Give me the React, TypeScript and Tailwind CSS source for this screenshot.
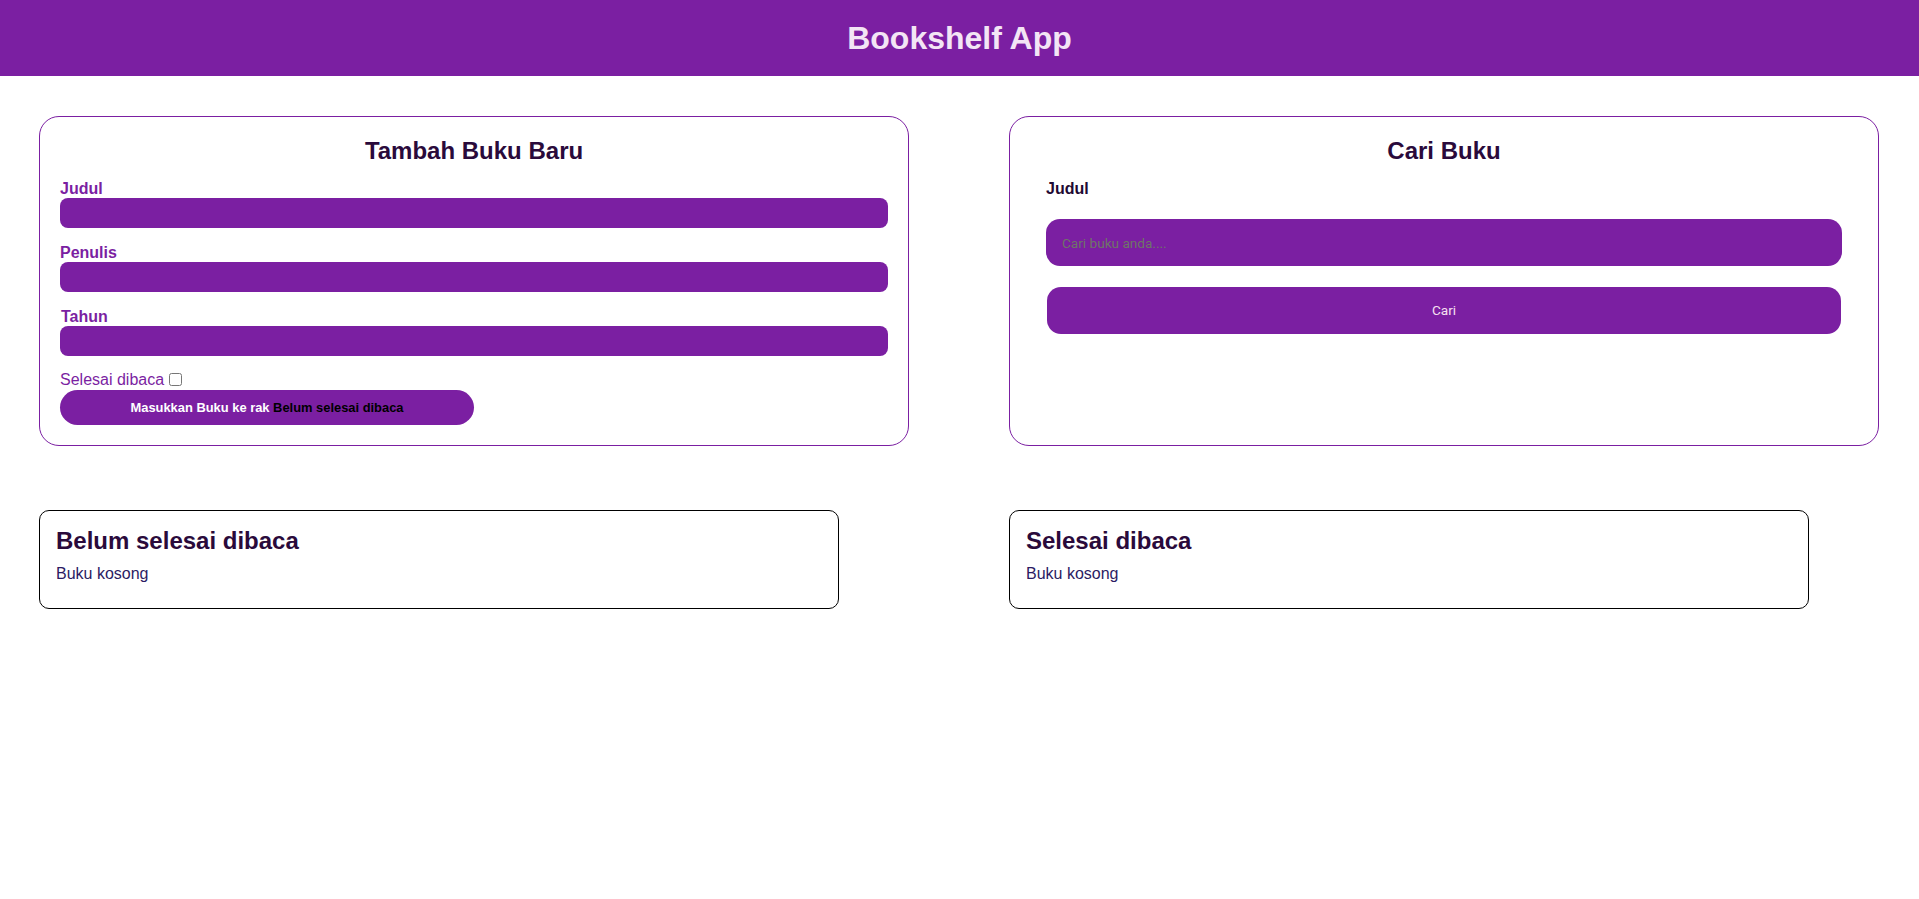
import React from "react";

export default function App() {
  return (
    <div className="min-h-[899px] bg-white font-['Liberation_Sans',Arial,sans-serif]">
      <header className="h-[76px] bg-[#7b1fa2] flex items-center justify-center">
        <h1 className="text-[32px] font-bold leading-[37px] text-[#f3e5f5]">Bookshelf App</h1>
      </header>
      <main className="pl-[39px] pr-[40px] pt-[40px]">
        <div className="grid grid-cols-2 gap-x-[100px]">
          <section className="border border-[#7b1fa2] rounded-[20px] p-[20px]">
            <h2 className="text-[24px] leading-[28px] font-bold text-center text-[#2a0a3b]">Tambah Buku Baru</h2>
            <form className="mt-[14px] flex flex-col" onSubmit={(e) => e.preventDefault()}>
              <label className="block text-[16px] leading-[19px] font-bold text-[#7b1fa2]">Judul</label>
              <input type="text" className="block w-full h-[30px] rounded-[8px] bg-[#7b1fa2] outline-none" />
              <label className="block mt-[15px] text-[16px] leading-[19px] font-bold text-[#7b1fa2]">Penulis</label>
              <input type="text" className="block w-full h-[30px] rounded-[8px] bg-[#7b1fa2] outline-none" />
              <label className="block mt-[15px] pl-[1px] text-[16px] leading-[19px] font-bold text-[#7b1fa2]">Tahun</label>
              <input type="number" className="block w-full h-[30px] rounded-[8px] bg-[#7b1fa2] outline-none" />
              <div className="mt-[14px] flex items-center text-[16px] leading-[19px] text-[#7b1fa2]">
                <span>Selesai dibaca</span>
                <input type="checkbox" className="ml-[5px] w-[13px] h-[13px]" />
              </div>
              <button
                type="submit"
                className="mt-[1px] w-[414px] h-[35px] rounded-full bg-[#7b1fa2] text-[12.9px] font-bold text-white"
              >
                Masukkan Buku ke rak <span className="text-black">Belum selesai dibaca</span>
              </button>
            </form>
          </section>
          <section className="border border-[#7b1fa2] rounded-[20px] p-[20px]">
            <h2 className="text-[24px] leading-[28px] font-bold text-center text-[#2a0a3b]">Cari Buku</h2>
            <form className="mt-[14px] px-[16px] flex flex-col" onSubmit={(e) => e.preventDefault()}>
              <label className="block text-[16px] leading-[19px] font-bold text-[#1f0a33]">Judul</label>
              <input
                type="text"
                placeholder="Cari buku anda...."
                className="block mt-[21px] w-full h-[47px] rounded-[14px] bg-[#7b1fa2] pl-[16px] font-['Roboto',sans-serif] text-[13.6px] text-white placeholder:text-[#6f7468] outline-none"
              />
              <button
                type="submit"
                className="mt-[21px] mx-[1px] h-[47px] rounded-[14px] bg-[#7b1fa2] pb-[1px] font-['Roboto',sans-serif] text-[13.6px] text-[#f6e0f0]"
              >
                Cari
              </button>
            </form>
          </section>
        </div>
        <div className="mt-[64px] grid grid-cols-2 gap-x-[100px]">
          <div className="w-[800px] border border-black rounded-[10px] p-[16px]">
            <h2 className="text-[24px] leading-[28px] font-bold text-[#2a0a3b]">Belum selesai dibaca</h2>
            <p className="mt-[9px] mb-[9px] text-[16px] leading-[19px] text-[#2b1b63]">Buku kosong</p>
          </div>
          <div className="w-[800px] border border-black rounded-[10px] p-[16px]">
            <h2 className="text-[24px] leading-[28px] font-bold text-[#2a0a3b]">Selesai dibaca</h2>
            <p className="mt-[9px] mb-[9px] text-[16px] leading-[19px] text-[#2b1b63]">Buku kosong</p>
          </div>
        </div>
      </main>
    </div>
  );
}
